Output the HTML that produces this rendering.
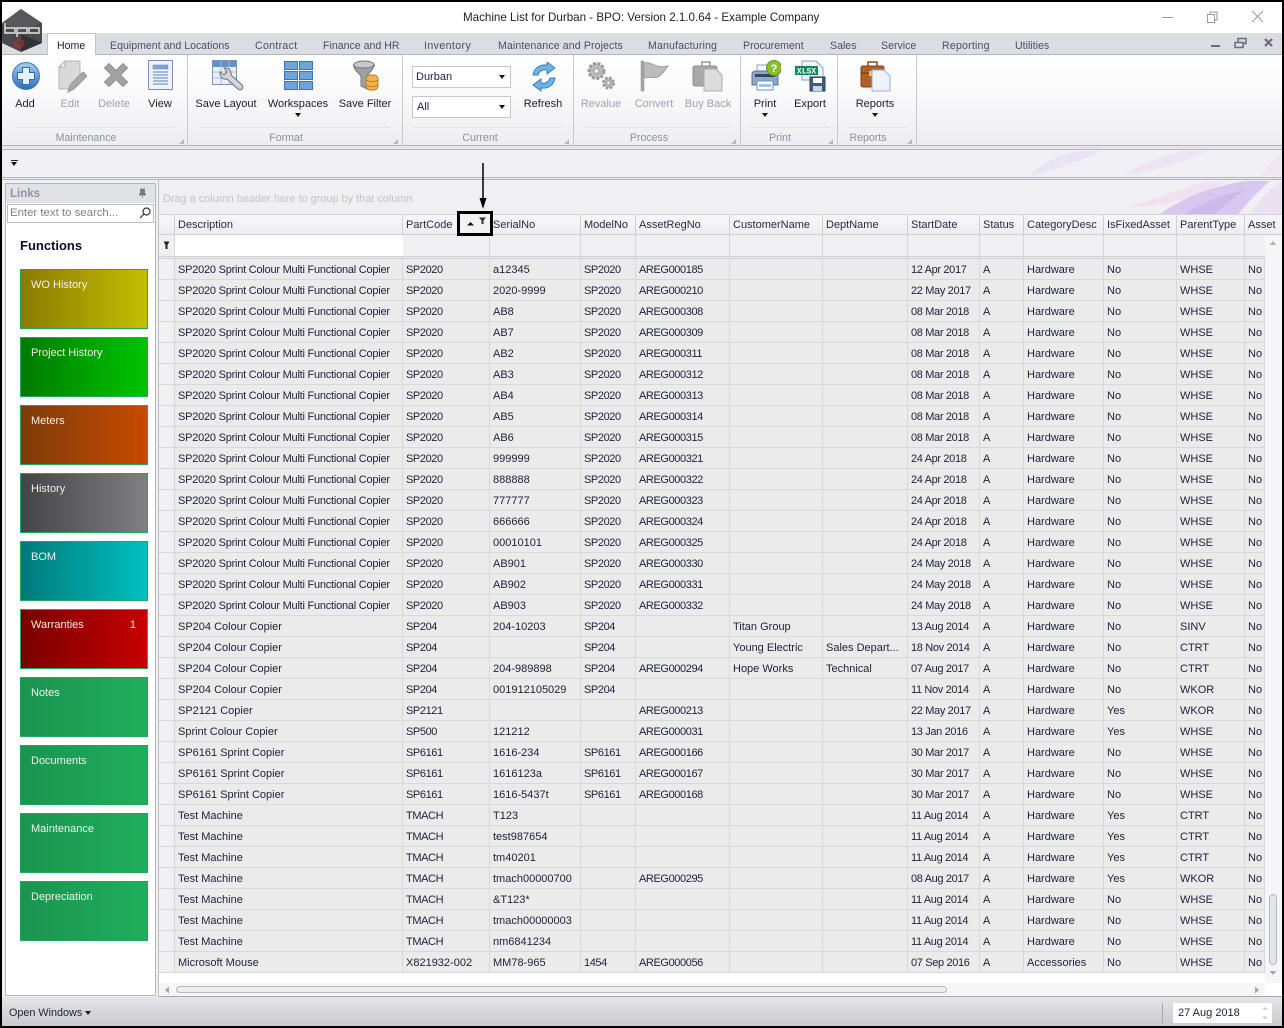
<!DOCTYPE html>
<html><head><meta charset="utf-8"><title>Machine List for Durban</title>
<style>
*{box-sizing:border-box}
html,body{margin:0;padding:0}
body{width:1284px;height:1028px;position:relative;overflow:hidden;background:#000;font-family:"Liberation Sans",sans-serif;font-size:11px;color:#1f1f3a}
.a{position:absolute}
.t{position:absolute;white-space:nowrap;line-height:14px}
.tab{position:absolute;top:39px;color:#4a4f63;white-space:nowrap;line-height:14px;font-size:10.600px}
.rl{position:absolute;top:97px;white-space:nowrap;line-height:14px;transform:translateX(-50%);font-size:11px;color:#1c1c30}
.dis{color:#a0a3ad}
.gl{position:absolute;top:131px;line-height:14px;transform:translateX(-50%);color:#8d909b;white-space:nowrap;font-size:10.600px}
.sep{position:absolute;top:55px;width:1px;height:91px;background:#c9cad0}
.tile{position:absolute;left:20px;width:128px;height:60px;border:1px solid #22a55c;color:#f0f0e8;padding:8px 0 0 10px;font-size:11px;line-height:14px}
.cr{position:absolute;width:0;height:0;border-left:3.500px solid transparent;border-right:3.500px solid transparent;border-top:4px solid #111}
.hd{position:absolute;top:214px;height:21px;border-right:1px solid #d0d0d4;line-height:20px;padding-left:3px;white-space:nowrap;overflow:hidden;font-size:11px;color:#2a2a40;background:linear-gradient(#f7f7f9,#eeeef1);border-bottom:1px solid #d0d0d4;border-top:1px solid #d5d5d9}
.fc{position:absolute;top:235px;height:21px;border-right:1px solid #d8d8dc;background:#f0f0f3}
table{position:absolute;left:159px;top:259px;border-collapse:separate;border-spacing:0;table-layout:fixed;width:1106px}
td{height:21px;padding:2px 0 0 3px;vertical-align:top;background:#ebebeb;border-right:1px solid #d8d8da;border-bottom:1px solid #d8d8da;white-space:nowrap;overflow:hidden;font-size:11px;line-height:18px;color:#1f1f3a}
td:first-child{background:#f1f1f3;padding:0}
td:nth-child(3),td:nth-child(5),td:nth-child(6){letter-spacing:-.4px}
td:nth-child(9){letter-spacing:-.35px}
tr:nth-child(-n+17) td:nth-child(2){letter-spacing:-.23px}
tr:last-child td:nth-child(3){letter-spacing:0}
</style></head><body>
<!-- window -->
<div class="a" style="left:2px;top:2px;width:1280px;height:1024px;background:#f0f0f3;overflow:hidden"></div>
<!-- title -->
<div class="a" style="left:2px;top:2px;width:1280px;height:31px;background:#fff"></div>
<div class="t" style="left:463px;top:11px;font-size:11.600px;color:#222">Machine List for Durban - BPO: Version 2.1.0.64 - Example Company</div>
<svg class="a" style="left:1155px;top:8px" width="115" height="18" fill="none" stroke="#9a9a9a"><path d="M7 9.500h11"/><path d="M52.500 6.500h7v8h-7zM55 6.500V4h7v8h-2.500"/><path d="M97 3l11 11M108 3L97 14"/></svg>
<!-- tabstrip -->
<div class="a" style="left:2px;top:33px;width:1280px;height:22px;background:#dcdde3;border-bottom:1px solid #b4b6bc"></div>
<div class="a" style="left:47px;top:33px;width:49px;height:23px;background:#fff;border:1px solid #c2c3c9;border-bottom:none"></div>
<div class="tab" style="left:57px;color:#1c1c30">Home</div>
<div class="tab" style="left:110px">Equipment and Locations</div>
<div class="tab" style="left:255px;letter-spacing:.3px">Contract</div>
<div class="tab" style="left:323px">Finance and HR</div>
<div class="tab" style="left:424px;letter-spacing:.4px">Inventory</div>
<div class="tab" style="left:498px;letter-spacing:.1px">Maintenance and Projects</div>
<div class="tab" style="left:648px;letter-spacing:.15px">Manufacturing</div>
<div class="tab" style="left:743px">Procurement</div>
<div class="tab" style="left:830px">Sales</div>
<div class="tab" style="left:881px">Service</div>
<div class="tab" style="left:942px;letter-spacing:.2px">Reporting</div>
<div class="tab" style="left:1015px">Utilities</div>
<svg class="a" style="left:1205px;top:36px" width="72" height="14"><path d="M6 10h9" stroke="#6a6d78" stroke-width="2"/><path d="M30 6.500h8v5h-8zM33 6V2.500h8v5h-3" fill="none" stroke="#6a6d78" stroke-width="1.500"/><path d="M60 3l7 7M67 3l-7 7" stroke="#6a6d78" stroke-width="2.200"/></svg>
<!-- logo -->
<svg class="a" style="left:2px;top:8px" width="42" height="46"><polygon points="19,1 40,15 40,35 19,44 0,35 0,15" fill="#4a4a4e"/><polygon points="19,1 40,15 19,24 0,15" fill="#58585c"/><polygon points="19,26 40,35 19,44" fill="#333336"/><path d="M3 20h10v5H3zM3 15v10M15 20h10v5H15zM15 20v9M27 20h10v5H27z" fill="none" stroke="#e8e8e8" stroke-width="1.400"/><polygon points="13,34 17,31 21,33 21,37 17,40 13,38" fill="none" stroke="#d0201c" stroke-width="1.300"/></svg>
<!-- ribbon -->
<div class="a" style="left:2px;top:55px;width:1280px;height:91px;background:linear-gradient(#fff,#fbfbfc 35%,#eeeef2);border-bottom:1px solid #b4b6bc"></div>
<div class="sep" style="left:187px"></div><div class="sep" style="left:402px"></div><div class="sep" style="left:573px"></div><div class="sep" style="left:740px"></div><div class="sep" style="left:837px"></div><div class="sep" style="left:916px"></div>
<svg class="a" style="left:12px;top:61px" width="28" height="30"><defs><linearGradient id="b1" x1="0" y1="0" x2="0" y2="1"><stop offset="0" stop-color="#a6cdf0"/><stop offset="1" stop-color="#2a70bd"/></linearGradient></defs><circle cx="14" cy="15" r="13.500" fill="url(#b1)" stroke="#3f79b5"/><path d="M10.500 6.500h7v5h5v7h-5v5h-7v-5h-5v-7h5z" fill="#e7f1fb" stroke="#2c6cb0"/></svg>
<svg class="a" style="left:58px;top:60px" width="29" height="33"><path d="M1 7l6-6h15v18l-8 10H1z" fill="#d9d9d9" stroke="#b5b5b5"/><path d="M1 7h6V1z" fill="#f0f0f0" stroke="#b5b5b5"/><path d="M10 32l2-7 13-13 4 4-13 13z" fill="#a9a9a9" stroke="#969696"/></svg>
<svg class="a" style="left:103px;top:62px" width="26" height="26"><path d="M1.500 6l4.500-4.500 7 7 7-7 4.500 4.500-7 7 7 7-4.500 4.500-7-7-7 7-4.500-4.500 7-7z" fill="#a2a2a2" stroke="#8f8f8f" stroke-linejoin="round"/></svg>
<svg class="a" style="left:148px;top:60px" width="26" height="31"><rect x=".5" y=".5" width="24" height="29" fill="#eef3fb" stroke="#7d8fb8"/><rect x="5" y="5" width="15" height="4" fill="#7aa5d6" stroke="#6088bd" stroke-width=".5"/><path d="M5 12h15M5 15h15M5 18h15M5 21h15M5 24h15" stroke="#5e80b5"/></svg>
<svg class="a" style="left:212px;top:60px" width="32" height="32"><rect x=".5" y=".5" width="24" height="24" fill="#edf1f7" stroke="#7d94b8"/><rect x="1" y="1" width="23" height="6" fill="#5f93cc"/><path d="M9 1v23M17 1v23M1 12h23M1 18h23" stroke="#a8bcd8"/><path d="M12 8a6 6 0 0 1 7 7l11 10a2.500 2.500 0 0 1-4 4L15 19a6 6 0 0 1-7-7l4 3 3-3z" fill="#d3d6db" stroke="#6d7078"/></svg>
<svg class="a" style="left:284px;top:61px" width="29" height="29"><g fill="#6fa4db" stroke="#3a73b3"><rect x=".5" y=".5" width="13" height="8"/><rect x="15.500" y=".5" width="13" height="8"/><rect x=".5" y="10.500" width="13" height="8"/><rect x="15.500" y="10.500" width="13" height="8"/><rect x=".5" y="20.500" width="13" height="8"/><rect x="15.500" y="20.500" width="13" height="8"/></g></svg>
<svg class="a" style="left:353px;top:60px" width="26" height="31"><ellipse cx="11" cy="5" rx="10.500" ry="4" fill="#c6c8cc" stroke="#777"/><path d="M.5 5c1 7 7 8 7.500 12v9l6 3V17c0-4 6-5 7-12-3 4-18 4-20.500 0z" fill="#9da0a6" stroke="#777"/><rect x="13" y="15" width="12" height="15" rx="4" fill="#f0b34f" stroke="#b87a1e"/><path d="M13 20c3 2 9 2 12 0M13 25c3 2 9 2 12 0" stroke="#b87a1e" fill="none"/></svg>
<svg class="a" style="left:528px;top:62px" width="32" height="30"><path d="M5 13C6 6 12 2 19 3V0l8 6-8 6V8c-4-1-8 1-9 5z" fill="#6fb3e6" stroke="#3781bd"/><path d="M27 16c-1 7-7 11-14 10v3l-8-6 8-6v4c4 1 8-1 9-5z" fill="#6fb3e6" stroke="#3781bd"/></svg>
<svg class="a" style="left:586px;top:60px" width="32" height="32" fill="#bcbcbc" stroke="#9a9a9a"><circle cx="10.500" cy="11" r="7.500" stroke-dasharray="3 1.500" stroke-width="3"/><circle cx="10.500" cy="11" r="2.500" fill="#eee"/><circle cx="22.500" cy="23" r="5" stroke-dasharray="2.500 1.500" stroke-width="3"/><circle cx="22.500" cy="23" r="2" fill="#eee"/></svg>
<svg class="a" style="left:640px;top:60px" width="30" height="32"><rect x="1" y="1" width="3" height="30" fill="#a5a5a5" stroke="#8f8f8f" stroke-width=".5"/><path d="M4 3c8-2 10 6 24 3-5 7-6 8-10 11-5 2-9-1-14 1z" fill="#bcbcbc" stroke="#a0a0a0"/></svg>
<svg class="a" style="left:692px;top:60px" width="32" height="32"><path d="M10 6V2h8v4" fill="none" stroke="#999" stroke-width="1.500"/><rect x="1" y="6" width="24" height="20" rx="2" fill="#a8a8a8" stroke="#919191"/><path d="M12 9h12l6 6v16H12z" fill="#dcdcdc" stroke="#ababab"/></svg>
<svg class="a" style="left:751px;top:60px" width="30" height="32"><rect x="6" y="5" width="15" height="9" fill="#fff" stroke="#8a9fbe"/><path d="M1 14c0-2 2-3 3-3h20c2 0 3 1 3 3v11H1z" fill="#8fa6c4" stroke="#5d7396"/><rect x="4" y="14" width="20" height="3" fill="#33465f"/><rect x="6" y="21" width="16" height="9" fill="#fff" stroke="#6d93c5"/><rect x="8" y="24" width="12" height="3" fill="#9cc2ea"/><circle cx="23" cy="8" r="7.500" fill="#8ac02f" stroke="#5f921a"/><text x="23" y="12" font-size="11" font-weight="bold" fill="#fff" text-anchor="middle" font-family="Liberation Sans">?</text></svg>
<svg class="a" style="left:794px;top:60px" width="32" height="32"><path d="M8 1h14l7 7v12H8z" fill="#f2f5fb" stroke="#8a9fbe"/><rect x="1" y="6" width="23" height="9" fill="#0f8a5b"/><text x="12.500" y="13.500" font-size="8" font-weight="bold" fill="#fff" text-anchor="middle" font-family="Liberation Mono">XLSX</text><rect x="16" y="17" width="15" height="14" fill="#415b7e" stroke="#2d415c"/><rect x="19" y="18" width="9" height="5" fill="#fff"/><rect x="19" y="26" width="9" height="5" fill="#c9d4e4"/></svg>
<svg class="a" style="left:860px;top:60px" width="32" height="32"><path d="M8 6V2h9v4" fill="none" stroke="#8a4b1c" stroke-width="1.500"/><rect x="1" y="6" width="23" height="21" rx="2" fill="#b2602a" stroke="#7d3f14"/><rect x="1" y="12" width="23" height="2" fill="#8a4b1c"/><rect x="9" y="11" width="4" height="5" fill="#e9c46a"/><path d="M12 10h12l6 6v15H12z" fill="#eef2fa" stroke="#9cb0cf"/></svg>
<div class="rl" style="left:25px">Add</div><div class="rl dis" style="left:70px">Edit</div><div class="rl dis" style="left:114px">Delete</div><div class="rl" style="left:160px">View</div>
<div class="rl" style="left:226px">Save Layout</div><div class="rl" style="left:298px">Workspaces</div><div class="rl" style="left:365px">Save Filter</div>
<div class="rl" style="left:543px">Refresh</div><div class="rl dis" style="left:601px">Revalue</div><div class="rl dis" style="left:654px">Convert</div><div class="rl dis" style="left:708px">Buy Back</div>
<div class="rl" style="left:765px">Print</div><div class="rl" style="left:810px">Export</div><div class="rl" style="left:875px">Reports</div>
<div class="cr" style="left:295px;top:113px"></div><div class="cr" style="left:762px;top:113px"></div><div class="cr" style="left:872px;top:113px"></div>
<div class="a" style="left:412px;top:66px;width:99px;height:22px;background:#fff;border:1px solid #c6c7cd;padding-left:3px;line-height:20px">Durban</div><div class="cr" style="left:499px;top:75px"></div>
<div class="a" style="left:412px;top:96px;width:99px;height:22px;background:#fff;border:1px solid #c6c7cd;padding-left:4px;line-height:20px">All</div><div class="cr" style="left:499px;top:105px"></div>
<div class="gl" style="left:86px">Maintenance</div><div class="gl" style="left:286px">Format</div><div class="gl" style="left:480px">Current</div><div class="gl" style="left:649px">Process</div><div class="gl" style="left:780px">Print</div><div class="gl" style="left:868px">Reports</div>
<svg class="a" style="left:0;top:125px" width="1000" height="22"><path d="M15 2.500h160M200 2.500h190M412 2.500h150M585 2.500h145M750 2.500h80M848 2.500h60" stroke="#e2e3e8"/><g fill="#b5b7be"><path d="M184 14v5h-5zM398 14v5h-5zM569 14v5h-5zM736 14v5h-5zM833 14v5h-5zM912 14v5h-5z"/></g></svg>
<!-- strip -->
<div class="a" style="left:2px;top:146px;width:1280px;height:4px;background:#e6e6ea;border-bottom:1px solid #b4b6bc"></div>
<div class="a" style="left:2px;top:150px;width:1280px;height:28px;background:#f1f1f5;border-bottom:1px solid #b6b7bd"></div>
<svg class="a" style="left:1020px;top:151px" width="262" height="26"><path d="M10 25C25 10 40 3 62 0h20C60 10 40 18 10 25z" fill="#e8e4f3"/><path d="M105 25c12-10 35-20 58-25h25c-22 10-45 18-83 25z" fill="#ebe5f4"/><path d="M240 25c6-8 14-18 22-25v25z" fill="#f0e7f1"/></svg>
<div class="a" style="left:11px;top:160px;width:7px;height:1px;background:#222"></div><div class="cr" style="left:11px;top:162px"></div>
<div class="a" style="left:2px;top:178px;width:1280px;height:2px;background:#e8e8ec;border-bottom:1px solid #b4b6bc"></div>
<!-- group panel -->
<div class="a" style="left:158px;top:180px;width:1124px;height:34px;background:#f0f0f3;border-left:1px solid #c0c1c7"></div>
<div class="t" style="left:163px;top:192px;color:#c2c3c9;font-size:10.900px">Drag a column header here to group by that column</div>
<svg class="a" style="left:1100px;top:181px" width="182" height="33"><path d="M30 26C55 18 80 8 105 1h20C100 16 70 24 30 26z" fill="#f0e0f1"/><path d="M60 33C85 15 115 5 145 0h25c-14 12-24 24-32 33z" fill="#d8c8ef"/><path d="M85 33c22-14 40-20 60-24-14 10-24 18-30 24z" fill="#cdb9ea"/><path d="M150 33c6-10 18-24 32-33v33z" fill="#ece0f3"/></svg>
<!-- left panel -->
<div class="a" style="left:5px;top:183px;width:151px;height:813px;background:#fff;border:1px solid #b4b6bc"></div>
<div class="a" style="left:6px;top:184px;width:149px;height:19px;background:#e1e2e6"></div>
<div class="t" style="left:10px;top:187px;font-weight:bold;color:#8f94a8;font-size:11.500px">Links</div>
<svg class="a" style="left:138px;top:188px" width="9" height="10"><path d="M2.500 1h4v4l1 1v1h-6V6l1-1zM4.500 7v3" fill="#777" stroke="#777" stroke-width=".7"/></svg>
<div class="a" style="left:7px;top:204px;width:147px;height:19px;background:#fff;border:1px solid #bcbdc3;padding-left:2px;line-height:17px;color:#7e7e8a;font-size:11.400px">Enter text to search...</div>
<svg class="a" style="left:139px;top:207px" width="12" height="12" fill="none" stroke="#333" stroke-width="1.200"><circle cx="7.500" cy="4.500" r="3.500"/><path d="M5 7l-4 4"/></svg>
<div class="t" style="left:20px;top:239px;font-weight:bold;font-size:13px;color:#0c0c28">Functions</div>
<div class="tile" style="top:269px;background:linear-gradient(90deg,#8a7b00,#c4bf00)">WO History</div>
<div class="tile" style="top:337px;background:linear-gradient(90deg,#007a00,#00c400)">Project History</div>
<div class="tile" style="top:405px;background:linear-gradient(90deg,#7d3c0a,#c84a00)">Meters</div>
<div class="tile" style="top:473px;background:linear-gradient(90deg,#444448,#808082)">History</div>
<div class="tile" style="top:541px;background:linear-gradient(90deg,#007a7a,#00c0c0)">BOM</div>
<div class="tile" style="top:609px;background:linear-gradient(90deg,#780000,#c80000)">Warranties<span style="position:absolute;right:11px">1</span></div>
<div class="tile" style="top:677px;background:linear-gradient(90deg,#1b9450,#1fae5c)">Notes</div>
<div class="tile" style="top:745px;background:linear-gradient(90deg,#1b9450,#1fae5c)">Documents</div>
<div class="tile" style="top:813px;background:linear-gradient(90deg,#1b9450,#1fae5c)">Maintenance</div>
<div class="tile" style="top:881px;background:linear-gradient(90deg,#1b9450,#1fae5c)">Depreciation</div>
<!-- grid -->
<div class="a" style="left:158px;top:214px;width:1124px;height:783px;background:#fff;border-left:1px solid #c0c1c7"></div>
<div class="hd" style="left:159px;width:16px"></div>
<div class="hd" style="left:175px;width:228px">Description</div>
<div class="hd" style="left:403px;width:87px">PartCode</div>
<div class="hd" style="left:490px;width:91px">SerialNo</div>
<div class="hd" style="left:581px;width:55px">ModelNo</div>
<div class="hd" style="left:636px;width:94px">AssetRegNo</div>
<div class="hd" style="left:730px;width:93px">CustomerName</div>
<div class="hd" style="left:823px;width:85px">DeptName</div>
<div class="hd" style="left:908px;width:72px">StartDate</div>
<div class="hd" style="left:980px;width:44px">Status</div>
<div class="hd" style="left:1024px;width:80px">CategoryDesc</div>
<div class="hd" style="left:1104px;width:73px">IsFixedAsset</div>
<div class="hd" style="left:1177px;width:68px">ParentType</div>
<div class="hd" style="left:1245px;width:37px;border-right:none">Asset</div>
<div class="fc" style="left:159px;width:16px"></div>
<div class="fc" style="left:175px;width:228px;background:#fff;border-right:none"></div>
<div class="fc" style="left:403px;width:87px"></div><div class="fc" style="left:490px;width:91px"></div><div class="fc" style="left:581px;width:55px"></div><div class="fc" style="left:636px;width:94px"></div><div class="fc" style="left:730px;width:93px"></div><div class="fc" style="left:823px;width:85px"></div><div class="fc" style="left:908px;width:72px"></div><div class="fc" style="left:980px;width:44px"></div><div class="fc" style="left:1024px;width:80px"></div><div class="fc" style="left:1104px;width:73px"></div><div class="fc" style="left:1177px;width:68px"></div><div class="fc" style="left:1245px;width:37px;border-right:none"></div>
<div class="a" style="left:159px;top:256px;width:1123px;height:3px;background:#ececef;border-top:1px solid #d2d2d6;border-bottom:1px solid #d2d2d6"></div>
<svg class="a" style="left:163px;top:241px" width="7" height="9"><path d="M.5.500h6L4.500 4v4h-2V4z" fill="#222"/></svg>
<table><colgroup><col style="width:16px"><col style="width:228px"><col style="width:87px"><col style="width:91px"><col style="width:55px"><col style="width:94px"><col style="width:93px"><col style="width:85px"><col style="width:72px"><col style="width:44px"><col style="width:80px"><col style="width:73px"><col style="width:68px"><col style="width:20px"></colgroup>
<tr><td></td><td>SP2020 Sprint Colour Multi Functional Copier</td><td>SP2020</td><td>a12345</td><td>SP2020</td><td>AREG000185</td><td></td><td></td><td>12 Apr 2017</td><td>A</td><td>Hardware</td><td>No</td><td>WHSE</td><td>No</td></tr>
<tr><td></td><td>SP2020 Sprint Colour Multi Functional Copier</td><td>SP2020</td><td>2020-9999</td><td>SP2020</td><td>AREG000210</td><td></td><td></td><td>22 May 2017</td><td>A</td><td>Hardware</td><td>No</td><td>WHSE</td><td>No</td></tr>
<tr><td></td><td>SP2020 Sprint Colour Multi Functional Copier</td><td>SP2020</td><td>AB8</td><td>SP2020</td><td>AREG000308</td><td></td><td></td><td>08 Mar 2018</td><td>A</td><td>Hardware</td><td>No</td><td>WHSE</td><td>No</td></tr>
<tr><td></td><td>SP2020 Sprint Colour Multi Functional Copier</td><td>SP2020</td><td>AB7</td><td>SP2020</td><td>AREG000309</td><td></td><td></td><td>08 Mar 2018</td><td>A</td><td>Hardware</td><td>No</td><td>WHSE</td><td>No</td></tr>
<tr><td></td><td>SP2020 Sprint Colour Multi Functional Copier</td><td>SP2020</td><td>AB2</td><td>SP2020</td><td>AREG000311</td><td></td><td></td><td>08 Mar 2018</td><td>A</td><td>Hardware</td><td>No</td><td>WHSE</td><td>No</td></tr>
<tr><td></td><td>SP2020 Sprint Colour Multi Functional Copier</td><td>SP2020</td><td>AB3</td><td>SP2020</td><td>AREG000312</td><td></td><td></td><td>08 Mar 2018</td><td>A</td><td>Hardware</td><td>No</td><td>WHSE</td><td>No</td></tr>
<tr><td></td><td>SP2020 Sprint Colour Multi Functional Copier</td><td>SP2020</td><td>AB4</td><td>SP2020</td><td>AREG000313</td><td></td><td></td><td>08 Mar 2018</td><td>A</td><td>Hardware</td><td>No</td><td>WHSE</td><td>No</td></tr>
<tr><td></td><td>SP2020 Sprint Colour Multi Functional Copier</td><td>SP2020</td><td>AB5</td><td>SP2020</td><td>AREG000314</td><td></td><td></td><td>08 Mar 2018</td><td>A</td><td>Hardware</td><td>No</td><td>WHSE</td><td>No</td></tr>
<tr><td></td><td>SP2020 Sprint Colour Multi Functional Copier</td><td>SP2020</td><td>AB6</td><td>SP2020</td><td>AREG000315</td><td></td><td></td><td>08 Mar 2018</td><td>A</td><td>Hardware</td><td>No</td><td>WHSE</td><td>No</td></tr>
<tr><td></td><td>SP2020 Sprint Colour Multi Functional Copier</td><td>SP2020</td><td>999999</td><td>SP2020</td><td>AREG000321</td><td></td><td></td><td>24 Apr 2018</td><td>A</td><td>Hardware</td><td>No</td><td>WHSE</td><td>No</td></tr>
<tr><td></td><td>SP2020 Sprint Colour Multi Functional Copier</td><td>SP2020</td><td>888888</td><td>SP2020</td><td>AREG000322</td><td></td><td></td><td>24 Apr 2018</td><td>A</td><td>Hardware</td><td>No</td><td>WHSE</td><td>No</td></tr>
<tr><td></td><td>SP2020 Sprint Colour Multi Functional Copier</td><td>SP2020</td><td>777777</td><td>SP2020</td><td>AREG000323</td><td></td><td></td><td>24 Apr 2018</td><td>A</td><td>Hardware</td><td>No</td><td>WHSE</td><td>No</td></tr>
<tr><td></td><td>SP2020 Sprint Colour Multi Functional Copier</td><td>SP2020</td><td>666666</td><td>SP2020</td><td>AREG000324</td><td></td><td></td><td>24 Apr 2018</td><td>A</td><td>Hardware</td><td>No</td><td>WHSE</td><td>No</td></tr>
<tr><td></td><td>SP2020 Sprint Colour Multi Functional Copier</td><td>SP2020</td><td>00010101</td><td>SP2020</td><td>AREG000325</td><td></td><td></td><td>24 Apr 2018</td><td>A</td><td>Hardware</td><td>No</td><td>WHSE</td><td>No</td></tr>
<tr><td></td><td>SP2020 Sprint Colour Multi Functional Copier</td><td>SP2020</td><td>AB901</td><td>SP2020</td><td>AREG000330</td><td></td><td></td><td>24 May 2018</td><td>A</td><td>Hardware</td><td>No</td><td>WHSE</td><td>No</td></tr>
<tr><td></td><td>SP2020 Sprint Colour Multi Functional Copier</td><td>SP2020</td><td>AB902</td><td>SP2020</td><td>AREG000331</td><td></td><td></td><td>24 May 2018</td><td>A</td><td>Hardware</td><td>No</td><td>WHSE</td><td>No</td></tr>
<tr><td></td><td>SP2020 Sprint Colour Multi Functional Copier</td><td>SP2020</td><td>AB903</td><td>SP2020</td><td>AREG000332</td><td></td><td></td><td>24 May 2018</td><td>A</td><td>Hardware</td><td>No</td><td>WHSE</td><td>No</td></tr>
<tr><td></td><td>SP204 Colour Copier</td><td>SP204</td><td>204-10203</td><td>SP204</td><td></td><td>Titan Group</td><td></td><td>13 Aug 2014</td><td>A</td><td>Hardware</td><td>No</td><td>SINV</td><td>No</td></tr>
<tr><td></td><td>SP204 Colour Copier</td><td>SP204</td><td></td><td>SP204</td><td></td><td>Young Electric</td><td>Sales Depart...</td><td>18 Nov 2014</td><td>A</td><td>Hardware</td><td>No</td><td>CTRT</td><td>No</td></tr>
<tr><td></td><td>SP204 Colour Copier</td><td>SP204</td><td>204-989898</td><td>SP204</td><td>AREG000294</td><td>Hope Works</td><td>Technical</td><td>07 Aug 2017</td><td>A</td><td>Hardware</td><td>No</td><td>CTRT</td><td>No</td></tr>
<tr><td></td><td>SP204 Colour Copier</td><td>SP204</td><td>001912105029</td><td>SP204</td><td></td><td></td><td></td><td>11 Nov 2014</td><td>A</td><td>Hardware</td><td>No</td><td>WKOR</td><td>No</td></tr>
<tr><td></td><td>SP2121 Copier</td><td>SP2121</td><td></td><td></td><td>AREG000213</td><td></td><td></td><td>22 May 2017</td><td>A</td><td>Hardware</td><td>Yes</td><td>WKOR</td><td>No</td></tr>
<tr><td></td><td>Sprint Colour Copier</td><td>SP500</td><td>121212</td><td></td><td>AREG000031</td><td></td><td></td><td>13 Jan 2016</td><td>A</td><td>Hardware</td><td>Yes</td><td>WHSE</td><td>No</td></tr>
<tr><td></td><td>SP6161 Sprint Copier</td><td>SP6161</td><td>1616-234</td><td>SP6161</td><td>AREG000166</td><td></td><td></td><td>30 Mar 2017</td><td>A</td><td>Hardware</td><td>No</td><td>WHSE</td><td>No</td></tr>
<tr><td></td><td>SP6161 Sprint Copier</td><td>SP6161</td><td>1616123a</td><td>SP6161</td><td>AREG000167</td><td></td><td></td><td>30 Mar 2017</td><td>A</td><td>Hardware</td><td>No</td><td>WHSE</td><td>No</td></tr>
<tr><td></td><td>SP6161 Sprint Copier</td><td>SP6161</td><td>1616-5437t</td><td>SP6161</td><td>AREG000168</td><td></td><td></td><td>30 Mar 2017</td><td>A</td><td>Hardware</td><td>No</td><td>WHSE</td><td>No</td></tr>
<tr><td></td><td>Test Machine</td><td>TMACH</td><td>T123</td><td></td><td></td><td></td><td></td><td>11 Aug 2014</td><td>A</td><td>Hardware</td><td>Yes</td><td>CTRT</td><td>No</td></tr>
<tr><td></td><td>Test Machine</td><td>TMACH</td><td>test987654</td><td></td><td></td><td></td><td></td><td>11 Aug 2014</td><td>A</td><td>Hardware</td><td>Yes</td><td>CTRT</td><td>No</td></tr>
<tr><td></td><td>Test Machine</td><td>TMACH</td><td>tm40201</td><td></td><td></td><td></td><td></td><td>11 Aug 2014</td><td>A</td><td>Hardware</td><td>Yes</td><td>CTRT</td><td>No</td></tr>
<tr><td></td><td>Test Machine</td><td>TMACH</td><td>tmach00000700</td><td></td><td>AREG000295</td><td></td><td></td><td>08 Aug 2017</td><td>A</td><td>Hardware</td><td>Yes</td><td>WKOR</td><td>No</td></tr>
<tr><td></td><td>Test Machine</td><td>TMACH</td><td>&amp;T123*</td><td></td><td></td><td></td><td></td><td>11 Aug 2014</td><td>A</td><td>Hardware</td><td>No</td><td>WHSE</td><td>No</td></tr>
<tr><td></td><td>Test Machine</td><td>TMACH</td><td>tmach00000003</td><td></td><td></td><td></td><td></td><td>11 Aug 2014</td><td>A</td><td>Hardware</td><td>No</td><td>WHSE</td><td>No</td></tr>
<tr><td></td><td>Test Machine</td><td>TMACH</td><td>nm6841234</td><td></td><td></td><td></td><td></td><td>11 Aug 2014</td><td>A</td><td>Hardware</td><td>No</td><td>WHSE</td><td>No</td></tr>
<tr><td></td><td>Microsoft Mouse</td><td>X821932-002</td><td>MM78-965</td><td>1454</td><td>AREG000056</td><td></td><td></td><td>07 Sep 2016</td><td>A</td><td>Accessories</td><td>No</td><td>WHSE</td><td>No</td></tr>
</table>
<!-- sort highlight -->
<div class="a" style="left:457px;top:211px;width:36px;height:25px;border:3px solid #000;background:#f2f2f4"></div>
<svg class="a" style="left:466px;top:216px" width="22" height="14"><path d="M1 9.500l3.500-3.500 3.500 3.500z" fill="#111"/><path d="M13 1.500h7l-2.500 3v3.500h-2V4.500z" fill="#333"/></svg>
<svg class="a" style="left:478px;top:163px" width="10" height="47"><path d="M5 0v38" stroke="#000" stroke-width="1.500"/><path d="M1.500 35h7L5 46z" fill="#000"/></svg>
<!-- scrollbars -->
<div class="a" style="left:1265px;top:236px;width:17px;height:747px;background:#f6f6f8"></div>
<svg class="a" style="left:1268px;top:239px" width="10" height="8"><path d="M1.500 6L5 2l3.500 4z" fill="#b4b5ba"/></svg>
<div class="a" style="left:1269px;top:894px;width:8px;height:71px;background:#e4e5e9;border:1px solid #b8b9c0;border-radius:4px"></div>
<svg class="a" style="left:1268px;top:969px" width="10" height="8"><path d="M1.500 2L5 6l3.500-4z" fill="#a4a5aa"/></svg>
<div class="a" style="left:159px;top:983px;width:1106px;height:14px;background:#f6f6f8"></div>
<svg class="a" style="left:163px;top:985px" width="8" height="10"><path d="M6 1.500L2 5l4 3.500z" fill="#a4a5aa"/></svg>
<div class="a" style="left:176px;top:986px;width:771px;height:7px;background:#eeeef1;border:1px solid #b8b9c0;border-radius:4px"></div>
<svg class="a" style="left:1253px;top:985px" width="8" height="10"><path d="M2 1.500L6 5 2 8.500z" fill="#a4a5aa"/></svg>
<div class="a" style="left:158px;top:996px;width:1124px;height:1px;background:#a9aab0"></div>
<!-- status -->
<div class="a" style="left:2px;top:997px;width:1280px;height:29px;background:linear-gradient(#e6e6e9,#c9c9ce)"></div>
<div class="t" style="left:9px;top:1006px;color:#1f1f3a;font-size:10.800px">Open Windows</div><div class="cr" style="left:85px;top:1011px"></div>
<div class="a" style="left:1162px;top:1003px;width:1px;height:20px;background:#aaabb0"></div>
<div class="a" style="left:1173px;top:1003px;width:99px;height:20px;background:#fff;padding-left:5px;line-height:20px">27 Aug 2018</div>
<svg class="a" style="left:1260px;top:1005px" width="10" height="16"><path d="M2 4.500L5 2l3 2.500zM2 11.500L5 14l3-2.500z" fill="#c8c8cc"/></svg>
</body></html>
